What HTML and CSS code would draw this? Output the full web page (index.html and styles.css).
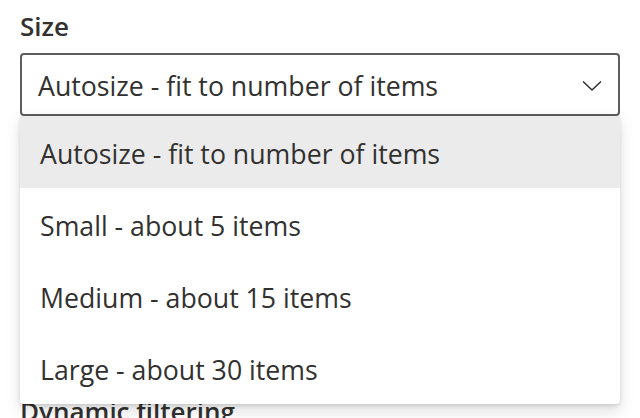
FILE: index.html
```html
<!DOCTYPE html>
<html lang="en">
<head>
<meta charset="utf-8">
<title>Size dropdown</title>
<link rel="stylesheet" href="styles.css">
</head>
<body>
<div class="panel">
  <div class="field">
    <label class="label">Size</label>
    <div class="dropdown">
      <span class="dropdown-title">Autosize - fit to number of items</span>
      <svg class="caret" width="20" height="12" viewBox="0 0 20 12" aria-hidden="true">
        <path d="M1 1.5 L10 10 L19 1.5" fill="none" stroke="#323130" stroke-width="1.6"/>
      </svg>
      <ul class="callout" role="listbox">
        <li class="option selected">Autosize - fit to number of items</li>
        <li class="option">Small - about 5 items</li>
        <li class="option">Medium - about 15 items</li>
        <li class="option">Large - about 30 items</li>
      </ul>
    </div>
  </div>
  <div class="field next">
    <label class="label">Dynamic filtering</label>
  </div>
</div>
</body>
</html>
```

FILE: styles.css
```css
* { box-sizing: border-box; }
html, body { margin: 0; padding: 0; background: #ffffff; }
body {
  font-family: "Open Sans", "Noto Sans", sans-serif;
  color: #323130;
  overflow: hidden;
  height: 418px;
}
.panel {
  padding: 6px 20px 0 20px;
}
.label {
  display: block;
  font-size: 26px;
  font-weight: 600;
  line-height: 40px;
  height: 40px;
  margin-bottom: 7px;
}
.dropdown {
  position: relative;
  width: 600px;
  height: 63px;
  border: 2px solid #605e5c;
  border-radius: 4px;
  display: flex;
  align-items: center;
  padding: 0 16px;
}
.dropdown-title {
  flex: 1;
  font-size: 26.7px;
  line-height: 56px;
  padding-top: 3px;
  white-space: nowrap;
}
.caret {
  flex: none;
  margin-top: 2px;
}
.callout {
  position: absolute;
  left: -2px;
  top: 61px;
  width: 600px;
  margin: 0;
  padding: 0;
  list-style: none;
  background: #ffffff;
  border-radius: 0 0 4px 4px;
  box-shadow: 0 6.4px 14.4px rgba(0,0,0,0.132), 0 1.2px 3.6px rgba(0,0,0,0.108);
  z-index: 10;
}
.option {
  height: 72px;
  line-height: 68px;
  padding: 4px 20px 0 20px;
  font-size: 26.7px;
  white-space: nowrap;
}
.option.selected {
  background: #ebebeb;
}
.next {
  margin-top: 275px;
}
```
